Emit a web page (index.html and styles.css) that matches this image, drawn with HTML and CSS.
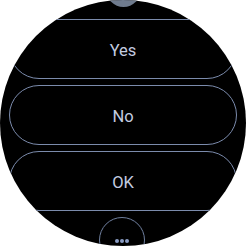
FILE: index.html
```html
<!DOCTYPE html>
<html>
<head>
<meta charset="utf-8">
<link rel="stylesheet" href="styles.css">
</head>
<body>
<div class="watch">
  <div class="bump"></div>
  <div class="list">
    <button class="pill">Yes</button>
    <button class="pill">No</button>
    <button class="pill">OK</button>
  </div>
  <div class="more">
    <span class="dot"></span><span class="dot"></span><span class="dot"></span>
  </div>
</div>
</body>
</html>
```
FILE: styles.css
```css
html, body {
  margin: 0;
  padding: 0;
  background: #ffffff;
}
.watch {
  position: relative;
  width: 246px;
  height: 246px;
  border-radius: 50%;
  background: #000000;
  overflow: hidden;
  font-family: Roboto, "Noto Sans", sans-serif;
}
.bump {
  position: absolute;
  left: 106px;
  top: -28px;
  width: 35px;
  height: 35px;
  border-radius: 50%;
  background: #6f7b8e;
}
.list {
  display: flex;
  flex-direction: column;
  gap: 6px;
  padding: 19px 9px 0;
}
.pill {
  box-sizing: border-box;
  height: 60px;
  width: 228px;
  border: 1px solid #7b8bac;
  border-radius: 30px;
  background: transparent;
  color: #c3cce0;
  font-family: Roboto, "Noto Sans", sans-serif;
  font-size: 16.5px;
  display: flex;
  align-items: center;
  justify-content: center;
  padding: 2px 0 0;
}
.more {
  position: absolute;
  left: 99px;
  top: 217px;
  width: 46px;
  height: 46px;
  border: 1px solid #6f7f9e;
  border-radius: 50%;
  display: flex;
  justify-content: center;
  gap: 1px;
  padding-top: 21px;
  box-sizing: border-box;
}
.dot {
  width: 4px;
  height: 4px;
  border-radius: 50%;
  background: #8a9cc4;
}
```
